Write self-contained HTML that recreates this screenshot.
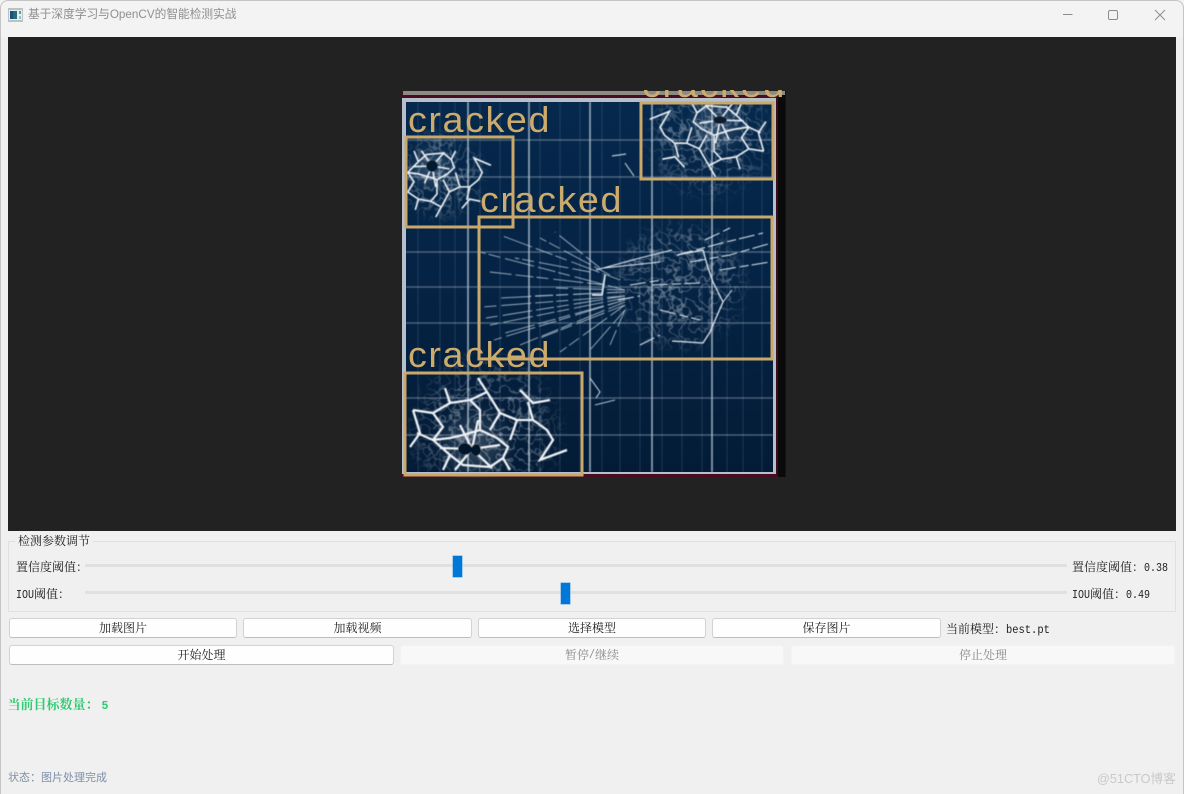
<!DOCTYPE html>
<html lang="zh"><head><meta charset="utf-8"><title>基于深度学习与OpenCV的智能检测实战</title>
<style>
html,body{margin:0;padding:0;background:#fff}
#w{position:relative;width:1184px;height:794px;overflow:hidden;background:#f0f0f0;font-family:"Liberation Mono","Noto Serif CJK SC",monospace;font-size:12px;color:#222}
#frame{position:absolute;left:0;top:0;width:1182px;height:800px;border:1px solid #c4c4c4;border-radius:8px 8px 0 0;pointer-events:none}
.t{position:absolute;white-space:nowrap;line-height:14px}
.m{display:inline-block;transform:scaleX(.833);transform-origin:left center;line-height:14px;vertical-align:top}
.b{position:absolute;box-sizing:border-box;height:20px;line-height:20px;text-align:center;background:#fefefe;border:1px solid #d2d2d2;border-bottom-color:#bdbdbd;border-radius:3px;color:#222}
.d{background:#f8f8f8;border-color:#f3f3f3;color:#8a8a8a}
.tr{position:absolute;left:85px;width:982px;height:3px;background:#dfe1df}
.h{position:absolute;width:9px;height:21px;background:#0078d7;box-shadow:0 0 0 .5px #5fa8e4}
.ck{letter-spacing:1.5px}
</style></head><body>
<div id="w">
<div style="position:absolute;left:0;top:0;width:1184px;height:37px;background:#f3f3f3"></div>
<svg style="position:absolute;left:8px;top:8px" width="15" height="14" viewBox="0 0 15 14"><rect width="15" height="14" fill="#b9c2c4"/><rect x="1" y="2" width="13" height="10" fill="#e8eeee"/><rect x="2" y="3" width="7" height="8" fill="#1e6f78"/><rect x="2" y="3" width="3" height="8" fill="#1c4f80"/><rect x="11" y="3" width="2" height="3" fill="#5f9aa0"/><rect x="11" y="8" width="2" height="3" fill="#9dbfc2"/></svg>
<div class="t" style="left:28px;top:8px;color:#8f8f8f;font-size:11.7px;font-family:'Liberation Sans','Noto Sans CJK SC',sans-serif">基于深度学习与OpenCV的智能检测实战</div>
<svg style="position:absolute;left:1050px;top:0" width="134" height="30" viewBox="1050 0 134 30" fill="none" stroke="#8c8c8c" stroke-width="1"><path d="M1063 14.5H1072.5"/><rect x="1108.5" y="10.5" width="9" height="9" rx="1.5"/><path d="M1155 10L1165 20M1165 10L1155 20"/></svg>

<div style="position:absolute;left:8px;top:37px;width:1168px;height:494px;background:#222"></div>
<svg style="position:absolute;left:0;top:0" width="1184" height="794" viewBox="0 0 1184 794" font-family="'Liberation Sans',sans-serif">
<defs><clipPath id="c"><rect x="401" y="90" width="385" height="388"/></clipPath>
<clipPath id="p"><rect x="406" y="102" width="367" height="370"/></clipPath>
<filter id="s" x="-5%" y="-5%" width="110%" height="110%"><feGaussianBlur stdDeviation=".5"/></filter>
<filter id="web" x="0" y="0" width="100%" height="100%" color-interpolation-filters="sRGB"><feTurbulence type="fractalNoise" baseFrequency=".1" numOctaves="2" seed="7"/><feColorMatrix type="matrix" values="0 0 0 0 .95  0 0 0 0 .97  0 0 0 0 .98  1 0 0 0 0"/><feComponentTransfer><feFuncA type="table" tableValues="0 0 0 0 0 0 0 0 0 0 0 0 0 0 .3 1 .3 0 0 0 0 0 0 0 0 0 0 0 0 0 0"/></feComponentTransfer><feGaussianBlur stdDeviation=".3"/></filter>
<radialGradient id="f"><stop offset="0" stop-color="#888"/><stop offset=".6" stop-color="#555"/><stop offset="1" stop-color="#000"/></radialGradient>
<radialGradient id="fd"><stop offset="0" stop-color="#777"/><stop offset=".7" stop-color="#555"/><stop offset="1" stop-color="#000"/></radialGradient>
<mask id="mk" maskUnits="userSpaceOnUse" x="401" y="91" width="385" height="386"><rect x="401" y="91" width="385" height="386" fill="#000"/>
<circle cx="440" cy="175" r="50" fill="url(#f)"/><circle cx="710" cy="135" r="70" fill="url(#f)"/><circle cx="485" cy="430" r="85" fill="url(#f)"/><ellipse cx="680" cy="285" rx="72" ry="70" fill="url(#fd)"/></mask>
<radialGradient id="g1"><stop offset="0" stop-color="#dfe8ee" stop-opacity=".22"/><stop offset="1" stop-color="#dfe8ee" stop-opacity="0"/></radialGradient>
<linearGradient id="bg" x1="0" y1="0" x2="0" y2="1"><stop offset="0" stop-color="#05284c"/><stop offset=".5" stop-color="#052344"/><stop offset="1" stop-color="#031b36"/></linearGradient>
<path id="wb" vector-effect="non-scaling-stroke" d="M433 440L450 438L463 435L480 430L497 438L508 447L503 458L490 467L463 465L450 455ZM413 410L433 413L450 403L470 400L487 392L500 413L517 420L533 420L547 430L553 440L540 460L567 450M487 392L478 378M433 413L443 427L433 440M470 400L480 410L480 430M500 413L490 430M417 433L433 440M413 410L420 433L410 447M450 455L443 470M503 458L510 470M520 390L533 403L550 400M533 420L528 402M450 403L445 388M472 449L460 425M472 449L478 420M472 449L440 448M472 449L500 445M472 449L455 470M472 449L492 468M517 420L510 440"/>
</defs>
<g clip-path="url(#c)">
<rect x="401" y="91" width="385" height="386" fill="#141414"/>
<rect x="401" y="91" width="384" height="4" fill="#8d8a86"/>
<rect x="401" y="95" width="384" height="3" fill="#4a0c20"/>
<rect x="400" y="91" width="3" height="386" fill="#4a0c20"/>
<rect x="402" y="474" width="376" height="3" fill="#4a0c20"/>
<rect x="776" y="98" width="2" height="378" fill="#3a0c1c"/>
<rect x="778" y="95" width="7" height="382" fill="#0a0a0a"/>
<rect x="402" y="98" width="374" height="376" fill="#b6bfca"/>
<rect x="406" y="102" width="367" height="370" fill="url(#bg)"/>
<g filter="url(#s)">
<g stroke="#6f93b3" stroke-opacity=".24" stroke-width="1" fill="none">
<path d="M418 102V472M440 102V472M455 102V472M480 102V472M500 102V472M540 102V472M560 102V472M580 102V472M602 102V472M620 102V472M640 102V472M662 102V472M682 102V472M702 102V472M727 102V472M743 102V472M762 102V472"/>
</g>
<g stroke="#a9bccb" stroke-opacity=".5" stroke-width="1.2" fill="none"><path d="M406 140H773M406 177H773M406 252H773M406 287H773M406 323H773M406 398H773M406 435H773"/></g>
<g stroke="#b9cad6" stroke-opacity=".85" stroke-width="1.5" fill="none"><path d="M468 102V472M529 102V472M590 102V472M652 102V472M712 102V472"/></g>

<circle cx="432" cy="168" r="26" fill="url(#g1)"/>
<circle cx="716" cy="125" r="32" fill="url(#g1)"/>
<circle cx="474" cy="445" r="42" fill="url(#g1)"/>
<rect x="406" y="102" width="367" height="370" fill="#fff" filter="url(#web)" mask="url(#mk)"/>

<g clip-path="url(#p)" stroke="#eef2f5" fill="none">
<use href="#wb" stroke-width="2.3"/>
<use href="#wb" stroke-width="1.6" transform="translate(432 166) scale(.62 -.72) translate(-472 -449)"/>
<use href="#wb" stroke-width="1.6" transform="translate(720 120) scale(-.74 -.8) translate(-472 -449)"/>
</g>
<g stroke="#e6edf2" fill="none" stroke-width=".9">
<path d="M612 156L626 154M625 163L634 176M590 378L600 392L596 398M595 405L615 400"/>
</g>
<ellipse cx="432" cy="166" rx="6" ry="6" fill="#061a30"/>
<ellipse cx="720" cy="120" rx="7" ry="4" fill="#071a30"/>
<ellipse cx="465" cy="449" rx="7" ry="6" fill="#05162b"/><ellipse cx="476" cy="450" rx="5" ry="6" fill="#05162b"/>

<g stroke="#c7d6e0" stroke-opacity=".8" fill="none" stroke-width=".9" stroke-dasharray="18 4 30 5 12 3">
<path d="M625 296L482 307M625 296L486 318M625 298L490 325M625 300L505 333M625 300L494 340M625 302L520 345M625 305L540 338M625 305L560 352M625 310L590 350M625 292L530 296M625 290L555 288M625 292L500 298"/>
<path d="M625 290L480 252M620 280L500 235M610 275L540 238M600 268L555 232M590 272L515 258M605 285L490 272M625 310L610 345"/>
</g>
<g stroke="#dfe8ef" fill="none" stroke-width="1.4">
<path d="M592 295H602L605 275" stroke-width="1.8"/>
<path d="M596 270L640 258L672 250M604 268L660 262" stroke-width="1"/>
<path d="M677 255L703 250L708 268L713 282L723 302L716 318L710 332L703 343L672 341" stroke-width="1.3"/>
<path d="M677 255L722 243L763 233M690 262L730 255L768 244M705 240L730 228M720 270L770 262M723 302L732 290M618 300L640 296M630 285L662 280M652 285L700 283M660 310L700 320M640 345L660 335" stroke-width="1" stroke-dasharray="16 4 9 3"/>
</g>
</g>
<g fill="none" stroke="#caa86a" stroke-width="3">
<rect x="641" y="103" width="132" height="76"/>
<rect x="406" y="137" width="107" height="90"/>
<rect x="479" y="217" width="293" height="142"/>
<rect x="405" y="373" width="177" height="102"/>
</g>
<g fill="#cdab6c" font-size="36" class="ck">
<text x="408" y="132" textLength="143" lengthAdjust="spacingAndGlyphs">cracked</text>
<text x="480" y="212" textLength="143" lengthAdjust="spacingAndGlyphs">cracked</text>
<text x="408" y="367" textLength="143" lengthAdjust="spacingAndGlyphs">cracked</text>
<text x="642" y="97" textLength="144" lengthAdjust="spacingAndGlyphs">cracked</text>
</g>
</g>
</svg>

<div style="position:absolute;left:8px;top:541px;width:1166px;height:69px;border:1px solid #e0e0e0"></div>
<div class="t" style="left:15px;top:535px;background:#f0f0f0;padding:0 3px">检测参数调节</div>
<div class="t" style="left:16px;top:561px">置信度阈值：</div>
<div class="t" style="left:16px;top:588px"><span class="m" style="width:18px">IOU</span>阈值：</div>
<div class="tr" style="top:564px"></div>
<div class="tr" style="top:591px"></div>
<div class="h" style="left:453px;top:556px"></div>
<div class="h" style="left:561px;top:583px"></div>
<div class="t" style="left:1072px;top:561px">置信度阈值：<span class="m" style="width:24px">0.38</span></div>
<div class="t" style="left:1072px;top:588px"><span class="m" style="width:18px">IOU</span>阈值：<span class="m" style="width:24px">0.49</span></div>

<div class="b" style="left:9px;top:618px;width:228px">加载图片</div>
<div class="b" style="left:243px;top:618px;width:229px">加载视频</div>
<div class="b" style="left:478px;top:618px;width:228px">选择模型</div>
<div class="b" style="left:712px;top:618px;width:229px">保存图片</div>
<div class="t" style="left:946px;top:623px">当前模型：<span class="m" style="width:44px;transform:scaleX(.87)">best.pt</span></div>
<div class="b" style="left:9px;top:645px;width:385px">开始处理</div>
<div class="b d" style="left:400px;top:645px;width:384px">暂停<span class="m" style="width:6px;line-height:18px">/</span>继续</div>
<div class="b d" style="left:791px;top:645px;width:384px">停止处理</div>

<div class="t" style="left:7.5px;top:699px;color:#2ecc71;font-weight:bold;font-size:13px">当前目标数量：<span style="font-size:11.5px;margin-left:3px">5</span></div>
<div class="t" style="left:8px;top:771px;color:#7f8fa8;font-size:11px;font-family:'Liberation Sans','Noto Sans CJK SC',sans-serif">状态：图片处理完成</div>
<div class="t" style="left:1097px;top:772px;color:#c9c9c9;font-family:'Liberation Sans','Noto Sans CJK SC',sans-serif;font-size:12.7px">@51CTO博客</div>
<div id="frame"></div>
</div>
</body></html>
